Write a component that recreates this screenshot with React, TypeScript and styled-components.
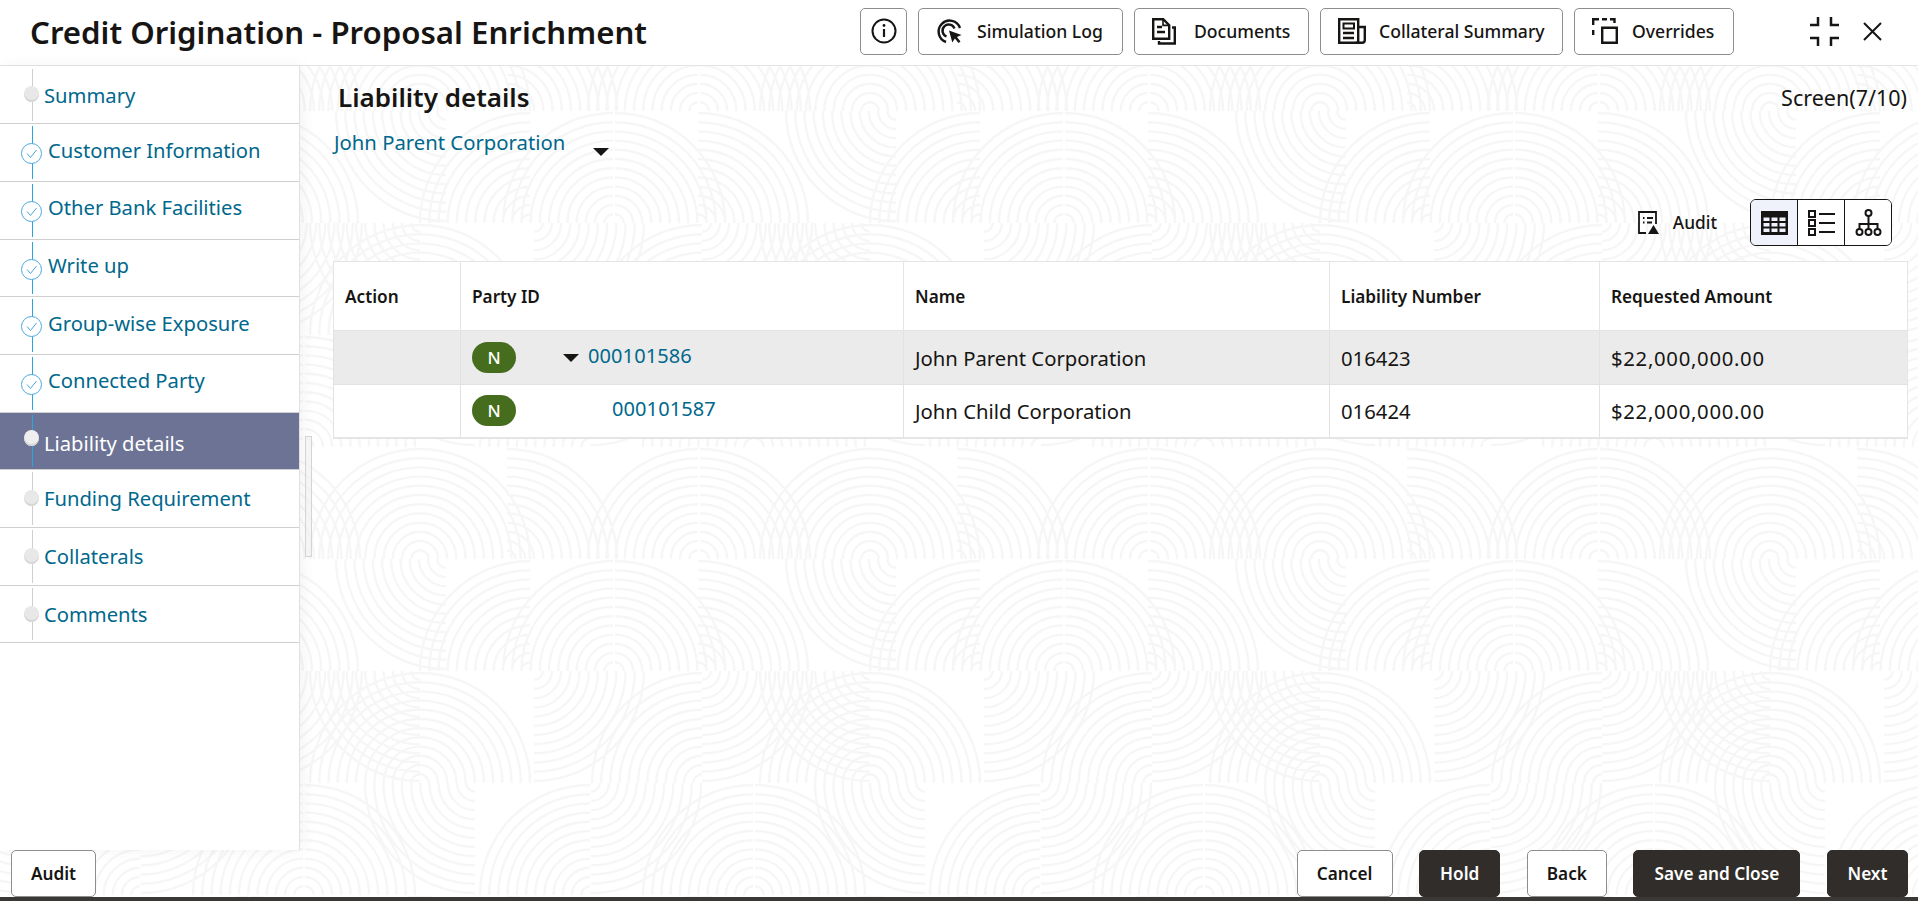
import React from 'react';
import styled, { createGlobalStyle } from 'styled-components';

const FONT = `'Noto Sans', 'Open Sans', Arial, sans-serif`;
const LINK = '#00688c';
const INK = '#161513';
const DARK = '#312d2a';

const GlobalStyle = createGlobalStyle`
  html, body {
    margin: 0;
    padding: 0;
    height: 100%;
    overflow: hidden;
    background: #fff;
    font-family: ${FONT};
    color: ${INK};
  }
`;

const Shell = styled.div`
  position: relative;
  display: flex;
  flex-direction: column;
  width: 1918px;
  height: 901px;
  overflow: hidden;
  background: #fff;
`;

const Backdrop = styled.svg`
  position: absolute;
  inset: 0;
  width: 100%;
  height: 100%;
`;

const Header = styled.header`
  position: relative;
  display: flex;
  align-items: center;
  flex: none;
  height: 66px;
  padding: 0 36px 0 30px;
  box-sizing: border-box;
  background: #fff;
  border-bottom: 1px solid #e4e4e4;
`;

const Title = styled.h1`
  flex: 1;
  margin: 0;
  font-size: 31.2px;
  font-weight: 600;
  line-height: 1;
`;

const HeaderActions = styled.div`
  display: flex;
  align-items: center;
  gap: 11px;
  margin-top: -3px;
`;

const HeaderButton = styled.button<{ $width?: number; $gap?: number }>`
  display: flex;
  align-items: center;
  gap: ${(p) => p.$gap ?? 15}px;
  width: ${(p) => p.$width ?? 47}px;
  height: 47px;
  padding: 0 0 0 17px;
  box-sizing: border-box;
  background: #fff;
  border: 1px solid #8f8d8b;
  border-radius: 5px;
  font: 500 17.6px ${FONT};
  white-space: nowrap;
  color: ${INK};
  svg { flex: none; }
`;

const InfoButton = styled(HeaderButton)`
  padding: 0;
  justify-content: center;
`;

const WindowControls = styled.div`
  display: flex;
  align-items: center;
  gap: 24px;
  margin: -3px 0 0 76px;
`;

const Body = styled.div`
  position: relative;
  display: flex;
  flex: none;
  height: 784px;
`;

const Sidebar = styled.nav`
  flex: none;
  width: 300px;
  padding-top: 0.6px;
  box-sizing: border-box;
  background: #fff;
  border-right: 1px solid #dfe1e6;
  box-shadow: 3px 0 14px rgba(0, 0, 0, 0.05);
`;

const StepRow = styled.div<{ $state: string }>`
  position: relative;
  display: flex;
  align-items: center;
  gap: ${(p) => (p.$state === 'done' ? '6px' : '5px')};
  height: 57.7px;
  box-sizing: border-box;
  padding-left: ${(p) => (p.$state === 'done' ? '21px' : '24px')};
  background: ${(p) => (p.$state === 'active' ? '#6c7394' : '#fff')};
  border-bottom: 1.5px solid #cfcfcf;

  &::before {
    content: '';
    position: absolute;
    left: 32px;
    top: 2px;
    bottom: 2px;
    width: 1px;
    background: ${(p) => (p.$state === 'pending' ? '#cfcfcf' : '#2aa5df')};
  }
`;

const StepLabel = styled.span<{ $state: string; $first?: boolean }>`
  position: relative;
  font-size: 20.2px;
  line-height: 26px;
  color: ${(p) => (p.$state === 'active' ? '#fff' : LINK)};
  margin-top: ${(p) =>
    p.$state === 'active' ? '3px' : p.$state === 'done' ? '-6px' : p.$first ? '1px' : '-1px'};
`;

const StepDot = styled.span<{ $active?: boolean }>`
  position: relative;
  flex: none;
  width: 15px;
  height: 16px;
  border-radius: 50%;
  margin-top: ${(p) => (p.$active ? '-6px' : '-1px')};
  background: ${(p) => (p.$active ? '#efefef' : '#e8e8e8')};
  box-shadow: inset 0 -2px 0 #d6d6d6;
`;

const StepCheck = styled.svg`
  position: relative;
  flex: none;
  margin-top: 2px;
`;

const Scrollbar = styled.div`
  position: absolute;
  left: 305px;
  top: 370px;
  width: 7px;
  height: 121px;
  box-sizing: border-box;
  border: 1px solid #d4d4d4;
  background: rgba(240, 240, 240, 0.6);
`;

const Main = styled.main`
  flex: 1;
  min-width: 0;
  padding: 0 11px 0 33px;
`;

const TitleRow = styled.div`
  display: flex;
  align-items: center;
  justify-content: space-between;
  height: 62px;
  padding-left: 5px;
`;

const PageTitle = styled.h2`
  margin: 0;
  font-size: 26px;
  font-weight: 600;
`;

const ScreenCount = styled.span`
  font-size: 21.5px;
`;

const PartySelect = styled.div`
  display: flex;
  align-items: center;
  gap: 28px;
  height: 28px;
  padding: 0 0 2px 1px;
  font-size: 20.3px;
  color: ${LINK};
`;

const DownCaret = styled.span<{ $nudge?: number }>`
  flex: none;
  width: 0;
  height: 0;
  margin-top: ${(p) => p.$nudge ?? 0}px;
  border-left: 8px solid transparent;
  border-right: 8px solid transparent;
  border-top: 8px solid ${INK};
`;

const ToolRow = styled.div`
  display: flex;
  align-items: center;
  justify-content: flex-end;
  height: 47px;
  margin-top: 41px;
  padding-right: 15px;
`;

const AuditTool = styled.div`
  display: flex;
  align-items: center;
  gap: 14px;
  margin-right: 33px;
  font-size: 17.3px;
  font-weight: 500;
`;

const ViewToggle = styled.div`
  display: flex;
  height: 47px;
  box-sizing: border-box;
  border: 1px solid #161513;
  border-radius: 6px;
  overflow: hidden;
  background: #fff;
`;

const ViewOption = styled.div<{ $selected?: boolean }>`
  display: flex;
  align-items: center;
  justify-content: center;
  width: 46px;
  background: ${(p) => (p.$selected ? '#eff2fb' : '#fff')};
  & + & { border-left: 1px solid #161513; }
`;

const Table = styled.table`
  width: 1574px;
  margin-top: 15px;
  border-collapse: collapse;
  table-layout: fixed;
  background: #fff;
  border: 1px solid #e5e5e5;
  border-bottom-width: 2px;
`;

const HeadCell = styled.th<{ $width: number }>`
  width: ${(p) => p.$width}px;
  height: 69px;
  padding: 0 11px;
  box-sizing: border-box;
  text-align: left;
  font-size: 17.2px;
  font-weight: 600;
  border-left: 1px solid #e5e5e5;
`;

const Row = styled.tr<{ $shaded?: boolean; $height: number }>`
  height: ${(p) => p.$height}px;
  background: ${(p) => (p.$shaded ? '#ebebeb' : '#fff')};
  border-top: 1px solid #e2e2e2;
`;

const Cell = styled.td`
  padding: 0 11px;
  font-size: 20.3px;
  border-left: 1px solid #e2e2e2;
`;

const AmountCell = styled(Cell)`
  letter-spacing: 0.7px;
`;

const PartyCell = styled.div`
  display: flex;
  align-items: center;
`;

const StatusBadge = styled.span`
  display: flex;
  align-items: center;
  justify-content: center;
  flex: none;
  width: 44px;
  height: 31px;
  border-radius: 16px;
  background: #466d1d;
  color: #fff;
  font-size: 17px;
  font-weight: 500;
`;

const TreeSpacer = styled.span<{ $width: number }>`
  display: flex;
  justify-content: flex-end;
  flex: none;
  width: ${(p) => p.$width}px;
`;

const PartyLink = styled.a<{ $gap?: number }>`
  margin: -4px 0 0 ${(p) => p.$gap ?? 0}px;
  color: ${LINK};
  font-size: 20px;
  letter-spacing: 0.1px;
`;

const Footer = styled.footer`
  position: relative;
  display: flex;
  align-items: center;
  flex: none;
  height: 47px;
  padding: 0 10px 0 11px;
  gap: 26.6px;
`;

const FooterButton = styled.button<{ $primary?: boolean; $width: number }>`
  width: ${(p) => p.$width}px;
  height: 47px;
  box-sizing: border-box;
  border: 1px solid ${(p) => (p.$primary ? DARK : '#8f8d8b')};
  border-radius: 5px;
  background: ${(p) => (p.$primary ? DARK : '#fff')};
  color: ${(p) => (p.$primary ? '#fff' : INK)};
  font: 600 17.2px ${FONT};
  &:first-child { margin-right: auto; }
`;

const BottomStrip = styled.div`
  position: relative;
  flex: none;
  height: 4px;
  background: #3a3836;
`;

type Quarter = [number, number, 'UR' | 'UL' | 'DR' | 'DL'];

// one 450 x 448 tile of the fingerprint wallpaper: x, row, which way the quarter opens
const QUARTERS: Quarter[] = [
  [0, 0, 'UR'], [87, 0, 'UR'], [278, 0, 'UL'], [280, 0, 'UR'], [450, 0, 'UL'],
  [26, 1, 'DL'], [110, 1, 'UL'], [193, 1, 'UL'], [195, 1, 'UR'], [278, 1, 'UR'],
  [0, 2, 'UR'], [0, 2, 'UL'], [114, 2, 'DR'], [282, 2, 'UL'], [282, 2, 'DR'], [0, 2, 'DL'],
  [55, 3, 'DL'], [170, 3, 'UL'], [171, 3, 'DR'], [333, 3, 'UL'], [335, 3, 'UR'],
];

const arcPath = (x: number, row: number, kind: Quarter[2], r: number) => {
  const up = kind[0] === 'U';
  const right = kind[1] === 'R';
  const cy = row * 112 + (up ? 112 : 0);
  const ex = right ? x + r : x - r;
  const ey = up ? cy - r : cy + r;
  const sweep = up === right ? 0 : 1;
  return `M${ex} ${cy}A${r} ${r} 0 0 ${sweep} ${x} ${ey}`;
};

const tilePaths = () => {
  const out: string[] = [];
  QUARTERS.forEach(([x, row, kind]) => {
    [x - 450, x, x + 450].forEach((px) => {
      for (let i = 0; i < 12; i++) {
        out.push(arcPath(px, row, kind, 110 - i * 9.2));
      }
    });
  });
  return out.join('');
};

const Wallpaper = () => (
  <Backdrop aria-hidden="true">
    <defs>
      <pattern id="prints" x={-30} y={-1} width={450} height={448} patternUnits="userSpaceOnUse">
        <path d={tilePaths()} fill="none" stroke="#f6f6f6" strokeWidth={2.4} />
      </pattern>
    </defs>
    <rect width="100%" height="100%" fill="url(#prints)" />
  </Backdrop>
);

const InfoIcon = () => (
  <svg width="26" height="26" viewBox="0 0 26 26" fill="none" stroke={INK} strokeWidth="2">
    <circle cx="13" cy="13" r="11.5" />
    <path d="M13 11v8" strokeWidth="2.2" />
    <circle cx="13" cy="7.5" r="1.4" fill={INK} stroke="none" />
  </svg>
);

const SimulationIcon = () => (
  <svg width="28" height="27" viewBox="0 0 28 27" fill="none" stroke={INK} strokeWidth="2.4">
    <path d="M24 10A11 11 0 1 0 10 24" />
    <path d="M18.5 10.5A6.2 6.2 0 1 0 10.5 18.5" />
    <path d="M13 12.5l12.5 4.5-4.6 2 3.6 4.4-2 1.6-3.6-4.4-2.6 4z" fill={INK} stroke="none" />
  </svg>
);

const DocumentsIcon = () => (
  <svg width="24" height="27" viewBox="0 0 24 27" fill="none" stroke={INK} strokeWidth="2.4">
    <path d="M1.2 1.2h10l6 6v13.6h-16z" />
    <path d="M11 1.2v6.2h6" strokeWidth="1.6" />
    <path d="M5 9h5M5 14h8" />
    <path d="M20 9.5h2.8v16H7v-2.6" />
  </svg>
);

const CollateralIcon = () => (
  <svg width="28" height="26" viewBox="0 0 28 26" fill="none" stroke={INK} strokeWidth="2.4">
    <path d="M1.2 1.2h19v23.6h-19z" />
    <path d="M5.5 5.5h10.500v5h-10.500z" strokeWidth="2" />
    <path d="M5 15h11M5 20h11" />
    <path d="M21 9h5.800v13a2.800 2.800 0 0 1-2.800 2.800H18" />
  </svg>
);

const OverridesIcon = () => (
  <svg width="26" height="26" viewBox="0 0 26 26" fill="none" stroke={INK} strokeWidth="2.4">
    <path d="M1.200 7V1.200H7M10 1.200h5M18 1.200h4.500V5" />
    <path d="M1.200 12v5" />
    <path d="M10.200 9.800h14.600v15h-14.600z" />
  </svg>
);

const CollapseIcon = () => (
  <svg width="29" height="29" viewBox="0 0 29 29" fill="none" stroke={INK} strokeWidth="2.500">
    <path d="M8 0v8H0M21 0v8h8M8 29v-8H0M21 29v-8h8" />
  </svg>
);

const CloseIcon = () => (
  <svg width="19" height="19" viewBox="0 0 19 19" fill="none" stroke={INK} strokeWidth="2">
    <path d="M1 1l17 17M18 1L1 18" />
  </svg>
);

const CheckCircle = () => (
  <StepCheck width="21" height="21" viewBox="0 0 21 21" fill="#fff" stroke="#4aa8de">
    <circle cx="10.500" cy="10.500" r="10" />
    <path d="M6 10.500l3.500 4 6-7.500" fill="none" />
  </StepCheck>
);

const AuditIcon = () => (
  <svg width="21" height="23" viewBox="0 0 21 23" fill="none" stroke={INK} strokeWidth="1.8">
    <path d="M8 22H1V1h17v12" />
    <path d="M5 7h1.500M9 7h6M5 11.500h1.500M9 11.500h5" />
    <path d="M15.500 14L21 23H10z" fill={INK} stroke="none" />
  </svg>
);

const TableIcon = () => (
  <svg width="27" height="24" viewBox="0 0 27 24">
    <path
      fillRule="evenodd"
      fill={INK}
      d="M0 0h27v24H0zM2.500 6.500v3.500h6v-3.500zM10.500 6.500v3.500h6v-3.500zM18.500 6.500v3.500h6v-3.500zM2.500 12v3.500h6V12zM10.500 12v3.500h6V12zM18.500 12v3.500h6V12zM2.500 17.500v3.500h6v-3.500zM10.500 17.500v3.500h6v-3.500zM18.500 17.500v3.500h6v-3.500z"
    />
  </svg>
);

const ListIcon = () => (
  <svg width="27" height="26" viewBox="0 0 27 26" fill="none" stroke={INK} strokeWidth="2">
    <path d="M1 1h6v6H1zM1 10h6v6H1zM1 19h6v6H1z" />
    <path d="M11 4h16M11 13h16M11 22h16" strokeWidth="2.200" />
  </svg>
);

const HierarchyIcon = () => (
  <svg width="27" height="27" viewBox="0 0 27 27" fill="none" stroke={INK} strokeWidth="2">
    <circle cx="13.500" cy="4" r="3" />
    <path d="M13.500 7v14M4.500 20v-5h18v5" />
    <circle cx="4.500" cy="23" r="3" />
    <circle cx="13.500" cy="23" r="3" />
    <circle cx="22.500" cy="23" r="3" />
  </svg>
);

const STEPS = [
  { label: 'Summary', state: 'pending' },
  { label: 'Customer Information', state: 'done' },
  { label: 'Other Bank Facilities', state: 'done' },
  { label: 'Write up', state: 'done' },
  { label: 'Group-wise Exposure', state: 'done' },
  { label: 'Connected Party', state: 'done' },
  { label: 'Liability details', state: 'active' },
  { label: 'Funding Requirement', state: 'pending' },
  { label: 'Collaterals', state: 'pending' },
  { label: 'Comments', state: 'pending' },
];

const COLUMNS = [
  { label: 'Action', width: 127 },
  { label: 'Party ID', width: 443 },
  { label: 'Name', width: 426 },
  { label: 'Liability Number', width: 270 },
  { label: 'Requested Amount', width: 308 },
];

const App = () => {
  return (
    <Shell>
      <GlobalStyle />
      <Wallpaper />
      <Header>
        <Title>Credit Origination - Proposal Enrichment</Title>
        <HeaderActions>
          <InfoButton aria-label="Info"><InfoIcon /></InfoButton>
          <HeaderButton $width={205} $gap={13}><SimulationIcon />Simulation Log</HeaderButton>
          <HeaderButton $width={175} $gap={18}><DocumentsIcon />Documents</HeaderButton>
          <HeaderButton $width={243} $gap={13}><CollateralIcon />Collateral Summary</HeaderButton>
          <HeaderButton $width={160} $gap={14}><OverridesIcon />Overrides</HeaderButton>
        </HeaderActions>
        <WindowControls>
          <CollapseIcon />
          <CloseIcon />
        </WindowControls>
      </Header>

      <Body>
        <Sidebar>
          {STEPS.map((step, i) => (
            <StepRow key={step.label} $state={step.state}>
              {step.state === 'done' ? <CheckCircle /> : <StepDot $active={step.state === 'active'} />}
              <StepLabel $state={step.state} $first={i === 0}>{step.label}</StepLabel>
            </StepRow>
          ))}
        </Sidebar>
        <Scrollbar />
        <Main>
          <TitleRow>
            <PageTitle>Liability details</PageTitle>
            <ScreenCount>Screen(7/10)</ScreenCount>
          </TitleRow>
          <PartySelect>
            John Parent Corporation
            <DownCaret $nudge={20} />
          </PartySelect>
          <ToolRow>
            <AuditTool><AuditIcon />Audit</AuditTool>
            <ViewToggle>
              <ViewOption $selected><TableIcon /></ViewOption>
              <ViewOption><ListIcon /></ViewOption>
              <ViewOption><HierarchyIcon /></ViewOption>
            </ViewToggle>
          </ToolRow>
          <Table>
            <thead>
              <tr>
                {COLUMNS.map((col) => (
                  <HeadCell key={col.label} $width={col.width}>{col.label}</HeadCell>
                ))}
              </tr>
            </thead>
            <tbody>
              <Row $shaded $height={54}>
                <Cell />
                <Cell>
                  <PartyCell>
                    <StatusBadge>N</StatusBadge>
                    <TreeSpacer $width={63}><DownCaret /></TreeSpacer>
                    <PartyLink $gap={9}>000101586</PartyLink>
                  </PartyCell>
                </Cell>
                <Cell>John Parent Corporation</Cell>
                <Cell>016423</Cell>
                <AmountCell>$22,000,000.00</AmountCell>
              </Row>
              <Row $height={53}>
                <Cell />
                <Cell>
                  <PartyCell>
                    <StatusBadge>N</StatusBadge>
                    <TreeSpacer $width={96} />
                    <PartyLink>000101587</PartyLink>
                  </PartyCell>
                </Cell>
                <Cell>John Child Corporation</Cell>
                <Cell>016424</Cell>
                <AmountCell>$22,000,000.00</AmountCell>
              </Row>
            </tbody>
          </Table>
        </Main>
      </Body>

      <Footer>
        <FooterButton $width={85}>Audit</FooterButton>
        <FooterButton $width={96}>Cancel</FooterButton>
        <FooterButton $primary $width={81}>Hold</FooterButton>
        <FooterButton $width={80}>Back</FooterButton>
        <FooterButton $primary $width={167}>Save and Close</FooterButton>
        <FooterButton $primary $width={81}>Next</FooterButton>
      </Footer>
      <BottomStrip />
    </Shell>
  );
};

export default App;
